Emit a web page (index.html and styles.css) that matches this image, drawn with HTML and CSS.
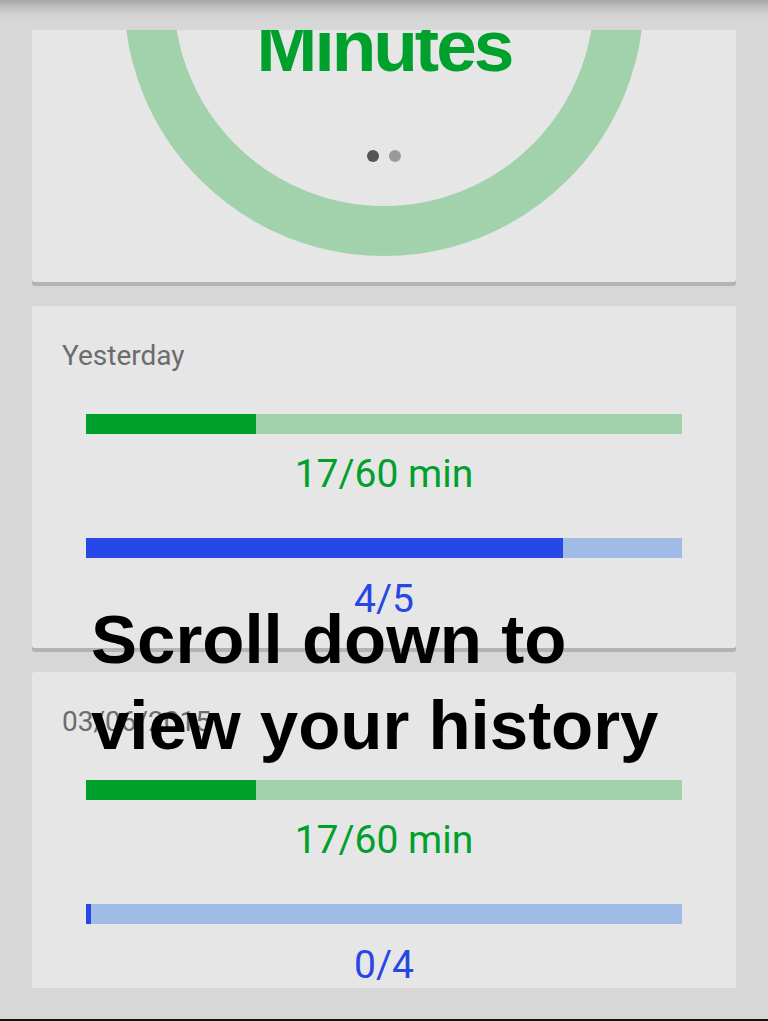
FILE: index.html
```html
<!DOCTYPE html>
<html lang="en">
<head>
<meta charset="utf-8">
<title>Activity</title>
<link rel="stylesheet" href="styles.css">
</head>
<body>
<div class="screen">
  <div class="topbar"></div>
  <div class="viewport">
    <div class="list">
      <section class="card today">
        <div class="gauge">
          <div class="gauge-title">Minutes</div>
          <div class="pager"><span class="dot active"></span><span class="dot"></span></div>
        </div>
      </section>

      <section class="card day">
        <div class="day-label">Yesterday</div>
        <div class="metrics">
          <div class="bar minutes"><div class="fill" style="width: 28.6%"></div></div>
          <div class="value minutes">17/60 min</div>
          <div class="bar tasks"><div class="fill" style="width: 80%"></div></div>
          <div class="value tasks">4/5</div>
        </div>
      </section>

      <section class="card day">
        <div class="day-label">03/06/2015</div>
        <div class="metrics">
          <div class="bar minutes"><div class="fill" style="width: 28.6%"></div></div>
          <div class="value minutes">17/60 min</div>
          <div class="bar tasks"><div class="fill" style="width: 0%"></div></div>
          <div class="value tasks">0/4</div>
        </div>
      </section>
    </div>
  </div>
  <div class="footer"></div>
  <div class="hint">Scroll down to<br>view your history</div>
</div>
</body>
</html>
```

FILE: styles.css
```css
* { box-sizing: border-box; }

html, body {
  margin: 0;
  padding: 0;
  background: #d7d7d7;
}

.screen {
  position: relative;
  width: 768px;
  height: 1021px;
  overflow: hidden;
  display: flex;
  flex-direction: column;
  background: #d7d7d7;
}

.topbar {
  flex: 0 0 30px;
  background: linear-gradient(to bottom, #a4a4a4 0, #bcbcbc 6px, #cfcfcf 13px, #d7d7d7 20px);
}

.viewport {
  flex: 0 0 958px;
  overflow: hidden;
}

.list {
  margin-top: -314px;
  padding: 0 32px;
  display: flex;
  flex-direction: column;
  gap: 24px;
}

.card {
  background: #e6e6e6;
  border-radius: 3px;
  box-shadow: 0 4px 0 #b3b3b3;
}

.today {
  padding: 20px 0 26px;
}

.gauge {
  width: 520px;
  height: 520px;
  margin: 0 auto;
  border: 50px solid #a1d2ab;
  border-radius: 50%;
  display: flex;
  flex-direction: column;
  justify-content: flex-end;
  align-items: center;
  padding-bottom: 44px;
}

.gauge-title {
  font-family: "Liberation Sans", Arial, sans-serif;
  font-weight: 700;
  font-size: 73px;
  line-height: 80px;
  letter-spacing: -3px;
  color: #00a02c;
}

.pager {
  margin-top: 64px;
  display: flex;
  gap: 10px;
}

.dot {
  width: 12px;
  height: 12px;
  border-radius: 50%;
  background: #9a9a9a;
}

.dot.active {
  background: #555555;
}

.day {
  padding: 34px 0 27px;
  font-family: Roboto, "Noto Sans", sans-serif;
}

.day-label {
  padding-left: 30px;
  font-size: 28px;
  line-height: 32px;
  color: #6c6c6c;
}

.metrics {
  padding: 0 54px;
  display: flex;
  flex-direction: column;
}

.bar {
  height: 20px;
  margin-top: 42px;
  display: flex;
}

.bar .fill {
  min-width: 5px;
  height: 100%;
}

.bar.minutes { background: #a1d2ab; }
.bar.minutes .fill { background: #00a02c; }
.bar.tasks { background: #9fbbe6; }
.bar.tasks .fill { background: #2646e6; }

.value {
  margin-top: 18px;
  font-size: 39px;
  line-height: 44px;
  text-align: center;
}

.value.tasks { margin-top: 19px; }

.value.minutes { color: #00a02c; }
.value.tasks { color: #2646e6; }

.footer {
  flex: 1 1 auto;
  border-bottom: 2px solid #111111;
}

.hint {
  position: absolute;
  left: 91px;
  top: 597px;
  font-family: "Liberation Sans", Arial, sans-serif;
  font-weight: 700;
  font-size: 69px;
  line-height: 86px;
  color: #000000;
}
```
